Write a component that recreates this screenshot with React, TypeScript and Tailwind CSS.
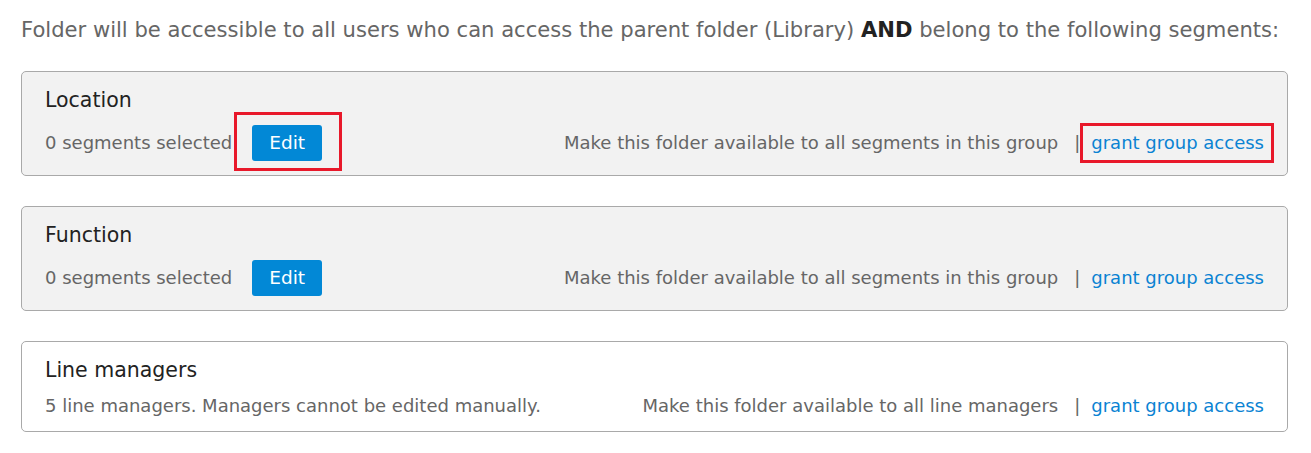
import React from "react";

function Card({
  title,
  left,
  right,
  edit,
  highlight,
  gray,
}: {
  title: string;
  left: string;
  right: string;
  edit?: boolean;
  highlight?: boolean;
  gray?: boolean;
}) {
  return (
    <div
      className={`rounded-[5px] border border-[#a9a9a9] px-[23px] pt-[14px] pb-[14px] ${
        gray ? "bg-[#f2f2f2]" : "bg-white"
      }`}
    >
      <div className="text-[20.5px] leading-[28px] text-[#222]">{title}</div>
      <div className="mt-[11px] flex items-center justify-between text-[18px] leading-[22px] text-[#666]">
        <div className="flex items-center">
          <span>{left}</span>
          {edit && (
            <span className="relative ml-[20px] flex">
              <button className="h-[36px] w-[70px] rounded-[3px] bg-[#0288d6] text-[18.5px] text-white">
                Edit
              </button>
              {highlight && (
                <span className="pointer-events-none absolute -left-[18px] -right-[20px] -top-[13px] -bottom-[10px] border-[3px] border-[#e8182a]" />
              )}
            </span>
          )}
        </div>
        <div className="flex items-center">
          <span>{right}</span>
          <span className="ml-[16px] mr-[11px]">|</span>
          <span className="relative text-[#0a83d3]">
            grant group access
            {highlight && (
              <span className="pointer-events-none absolute -left-[11px] -right-[10px] -top-[9px] -bottom-[9px] border-[3px] border-[#e8182a]" />
            )}
          </span>
        </div>
      </div>
    </div>
  );
}

export default function App() {
  return (
    <div
      className="bg-white pl-[21px] pr-[23px] pt-[16px]"
      style={{ fontFamily: '"DejaVu Sans", Verdana, sans-serif' }}
    >
      <p className="whitespace-nowrap text-[21.1px] leading-[28px] text-[#666]">
        Folder will be accessible to all users who can access the parent folder (Library){" "}
        <b className="text-[#222]">AND</b> belong to the following segments:
      </p>
      <div className="mt-[27px] flex flex-col gap-[30px]">
        <Card
          title="Location"
          left="0 segments selected"
          right="Make this folder available to all segments in this group"
          edit
          highlight
          gray
        />
        <Card
          title="Function"
          left="0 segments selected"
          right="Make this folder available to all segments in this group"
          edit
          gray
        />
        <Card
          title="Line managers"
          left="5 line managers. Managers cannot be edited manually."
          right="Make this folder available to all line managers"
        />
      </div>
    </div>
  );
}
